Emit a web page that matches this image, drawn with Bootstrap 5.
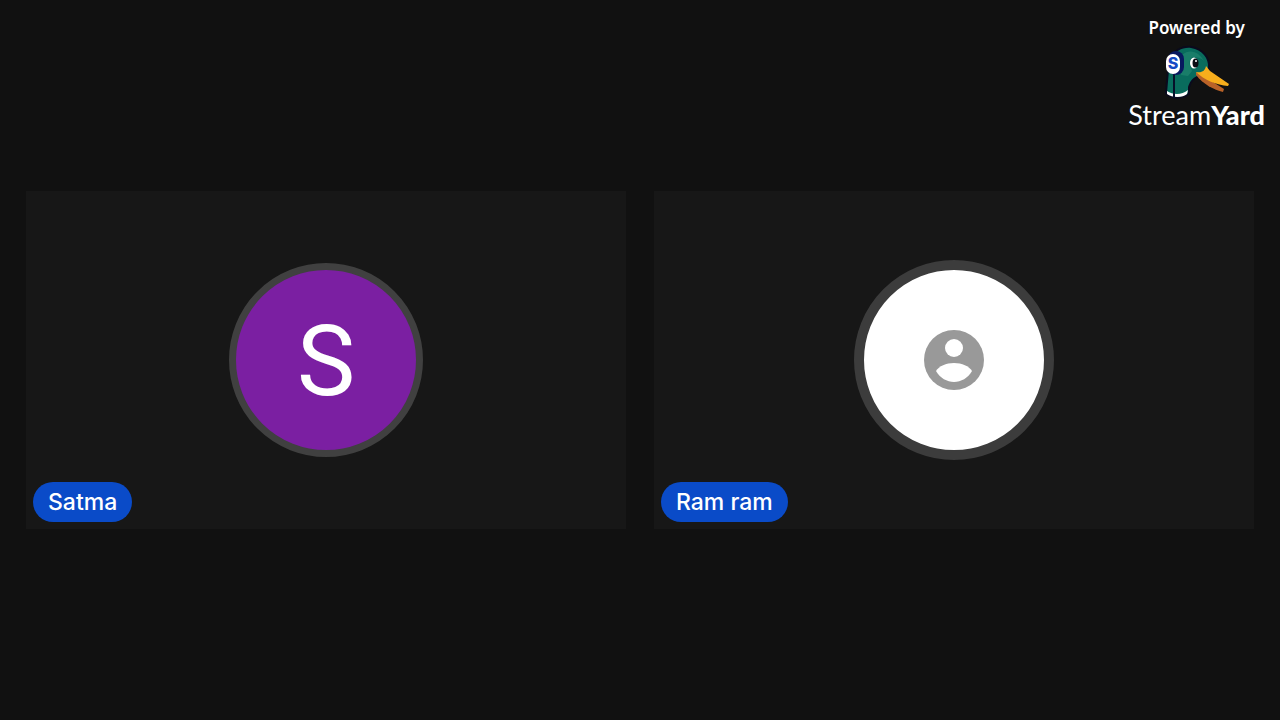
<!DOCTYPE html>
<html lang="en">
<head>
<meta charset="utf-8">
<meta name="viewport" content="width=device-width, initial-scale=1">
<title>StreamYard</title>
<link href="https://cdn.jsdelivr.net/npm/bootstrap@5.3.0/dist/css/bootstrap.min.css" rel="stylesheet">
<style>
  body { background: #111; color: #fff; font-family: Inter, "Liberation Sans", sans-serif; }
  .stage { padding: 24px 26px; }
  .stage-grid { --bs-gutter-x: 28px; --bs-gutter-y: 28px; }
  .tile { background: #171717; }
  .avatar { box-sizing: content-box; width: 180px; height: 180px; border: 7px solid #404040; }
  .avatar-letter { background: #7b1fa2; font: 400 98px/1 Roboto, sans-serif; padding-top: 4px; height: 176px; }
  .avatar-empty { background: #fff; border: 10px solid #3c3c3c; }
  .name-tag { background: #0a4bc8; margin: 7px; padding: 0 15px; font-size: 23px; line-height: 40px; font-weight: 500; }
  .brand { top: 16px; right: 15px; }
  .brand-by { font: 600 17px/24px "Noto Sans", sans-serif; margin-bottom: 2px; }
  .brand-name { font: 400 27px/26px Lato, sans-serif; }
  .brand-name strong { font-weight: 900; }
</style>
</head>
<body>
<main class="stage min-vh-100 d-flex flex-column justify-content-center position-relative">
  <div class="row row-cols-2 stage-grid">
    <section class="col" aria-label="Satma">
      <div class="tile ratio ratio-16x9">
        <div class="d-flex align-items-center justify-content-center">
          <div class="avatar avatar-letter rounded-circle d-flex align-items-center justify-content-center">S</div>
        </div>
        <div class="d-flex align-items-end">
          <span class="name-tag rounded-pill">Satma</span>
        </div>
      </div>
    </section>
    <section class="col" aria-label="Ram ram">
      <div class="tile ratio ratio-16x9">
        <div class="d-flex align-items-center justify-content-center">
          <div class="avatar avatar-empty rounded-circle d-flex align-items-center justify-content-center">
            <svg width="60" height="60" viewBox="0 0 60 60" aria-hidden="true">
              <circle cx="30" cy="30" r="30" fill="#999"/>
              <circle cx="30" cy="18" r="9" fill="#fff"/>
              <path d="M12 41C15 36 22 33 30 33S45 36 48 41C44 48 37 52 30 52S16 48 12 41Z" fill="#fff"/>
            </svg>
          </div>
        </div>
        <div class="d-flex align-items-end">
          <span class="name-tag rounded-pill">Ram ram</span>
        </div>
      </div>
    </section>
  </div>
  <div class="brand position-absolute d-flex flex-column align-items-center">
    <span class="brand-by">Powered by</span>
    <svg width="84" height="60" viewBox="0 0 84 60" aria-hidden="true">
      <path d="M17 16C20 9 28 5 36 6C47 8 54 16 53 26C51 31 46 33 42 34C37 36 34 41 33 45V51C28 56 17 56 12 51L14 28Z" fill="#096c5d" stroke="#0a0a1d" stroke-width="4" paint-order="stroke"/>
      <path d="M27 13C35 6 44 10 49 19C46 16 43 15 39 15C35 15 34 19 35 24L37 29L33 34L26 33Z" fill="#21856f" opacity=".7"/>
      <path d="M12 49C18 53 27 53 33 48L32 52C28 56 17 56 12 52Z" fill="#fff"/>
      <path d="M41 30L47 33L69 47L68 50C59 48 48 42 41 33Z" fill="#b96228"/>
      <path d="M41 30C47 31 50 29 51 24L55 29L74 42L73 44C62 43 49 38 41 30Z" fill="#f8ae1c"/>
      <ellipse cx="39" cy="21" rx="4" ry="5.500" fill="#fff"/>
      <ellipse cx="40.500" cy="21" rx="3" ry="4.500" fill="#080c14"/>
      <circle cx="41" cy="19" r="1" fill="#fff"/>
      <path d="M19 29V56" stroke="#06102a" stroke-width="2"/>
      <rect x="13" y="9" width="16" height="24" rx="8" fill="#07195f"/>
      <rect x="11" y="12" width="14" height="20" rx="7" fill="#fff"/>
      <text x="18" y="27" text-anchor="middle" font-family="Inter, sans-serif" font-size="16" font-weight="800" fill="#164bc4">S</text>
    </svg>
    <span class="brand-name">Stream<strong>Yard</strong></span>
  </div>
</main>
<script src="https://cdn.jsdelivr.net/npm/bootstrap@5.3.0/dist/js/bootstrap.bundle.min.js"></script>
</body>
</html>
